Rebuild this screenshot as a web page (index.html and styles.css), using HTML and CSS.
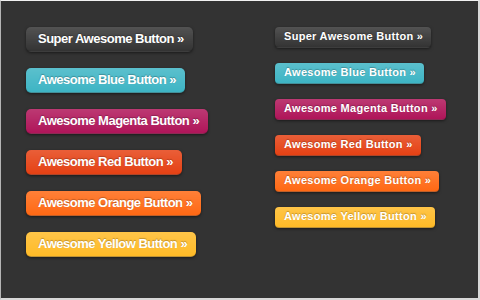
FILE: index.html
```html
<!DOCTYPE html>
<html lang="en">
<head>
  <meta charset="UTF-8" />
  <meta name="viewport" content="width=device-width, initial-scale=1" />
  <title>Super Awesome Buttons</title>
  <link rel="stylesheet" href="styles.css">
</head>
<body>
  <div class="frame">
    <div class="column large">
      <a href="#" class="awesome">Super Awesome Button &raquo;</a>
      <a href="#" class="awesome blue">Awesome Blue Button &raquo;</a>
      <a href="#" class="awesome magenta">Awesome Magenta Button &raquo;</a>
      <a href="#" class="awesome red">Awesome Red Button &raquo;</a>
      <a href="#" class="awesome orange">Awesome Orange Button &raquo;</a>
      <a href="#" class="awesome yellow">Awesome Yellow Button &raquo;</a>
    </div>
    <div class="column small">
      <a href="#" class="awesome">Super Awesome Button &raquo;</a>
      <a href="#" class="awesome blue">Awesome Blue Button &raquo;</a>
      <a href="#" class="awesome magenta">Awesome Magenta Button &raquo;</a>
      <a href="#" class="awesome red">Awesome Red Button &raquo;</a>
      <a href="#" class="awesome orange">Awesome Orange Button &raquo;</a>
      <a href="#" class="awesome yellow">Awesome Yellow Button &raquo;</a>
    </div>
  </div>
</body>
</html>
```

FILE: styles.css
```css
* {
  margin: 0;
  padding: 0;
  box-sizing: border-box;
}
html, body {
  width: 480px;
  height: 300px;
  background-color: #333;
  overflow: hidden;
}
.frame {
  width: 480px;
  height: 300px;
  background-color: #333;
  border-top: 1px solid #f2f2f2;
  border-left: 1px solid #b5b5b5;
  border-right: 2px solid #d8d8d8;
  border-bottom: 2px solid #d8d8d8;
  display: grid;
  grid-template-columns: 249px 1fr;
  padding: 26px 0 0 25px;
}
.column {
  display: flex;
  flex-direction: column;
  align-items: flex-start;
}

/* buttons */
.awesome {
  background-color: #222;
  background-image: linear-gradient(rgba(255, 255, 255, 0.22), rgba(255, 255, 255, 0.08));
  display: inline-block;
  color: #fff;
  text-decoration: none;
  font-family: "Liberation Sans", Arial, sans-serif;
  font-weight: bold;
  line-height: 1;
  border-radius: 5px;
  box-shadow: 0 1px 3px rgba(0, 0, 0, 0.5);
  text-shadow: 0 -1px 1px rgba(0, 0, 0, 0.25);
  border-bottom: 1px solid rgba(0, 0, 0, 0.25);
  white-space: nowrap;
}
.large {
  gap: 16px;
}
.large .awesome {
  font-size: 13px;
  letter-spacing: -0.5px;
  padding: 5px 9px 6px 12px;
}
.small {
  gap: 15px;
}
.small .awesome {
  font-size: 11px;
  letter-spacing: 0.3px;
  padding: 4px 8px 5px 9px;
  border-radius: 4px;
}
.blue {
  background-color: #2daebf;
}
.magenta {
  background-color: #a9014b;
}
.red {
  background-color: #e33100;
}
.orange {
  background-color: #ff5c00;
}
.yellow {
  background-color: #ffb515;
}
```
